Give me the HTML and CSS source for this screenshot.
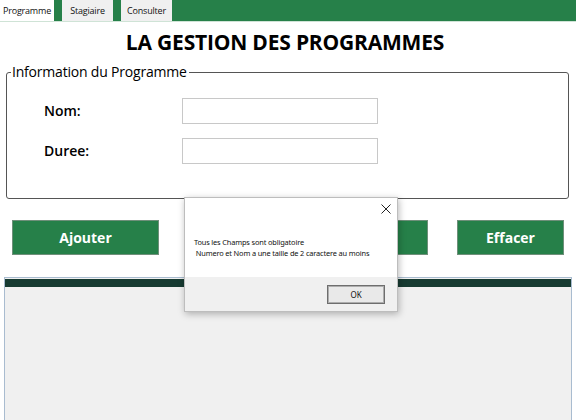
FILE: index.html
```html
<!DOCTYPE html>
<html>
<head>
<meta charset="utf-8">
<link rel="stylesheet" href="styles.css">
</head>
<body>
<div class="app">
  <div class="tabs">
    <div class="tab active">Programme</div>
    <div class="tab">Stagiaire</div>
    <div class="tab">Consulter</div>
  </div>
  <h1 class="title">LA GESTION DES PROGRAMMES</h1>
  <fieldset class="group">
    <legend class="legend">Information du Programme</legend>
    <div class="row"><label class="lbl">Nom:</label><div class="input"></div></div>
    <div class="row"><label class="lbl">Duree:</label><div class="input"></div></div>
  </fieldset>
  <div class="buttons">
    <div class="btn btn-add">Ajouter</div>
    <div class="btn btn-mid">Modifier</div>
    <div class="btn btn-clear">Effacer</div>
  </div>
  <div class="grid">
    <div class="grid-head"></div>
  </div>
  <div class="dialog">
    <div class="dialog-body">
      <div class="dialog-close">
        <svg width="10" height="10" viewBox="0 0 10 10"><path d="M0.5 0.5L9.5 9.5M9.5 0.5L0.5 9.5" stroke="#222" stroke-width="1"/></svg>
      </div>
      <div class="dialog-text">Tous les Champs sont obligatoire<br>&nbsp;Numero et Nom a une taille de 2 caractere au moins</div>
    </div>
    <div class="dialog-foot">
      <div class="ok">OK</div>
    </div>
  </div>
</div>
</body>
</html>
```
FILE: styles.css
```css
* { box-sizing: border-box; }
html, body { margin: 0; padding: 0; }
body {
  width: 576px;
  height: 420px;
  overflow: hidden;
  background: #fff;
  font-family: "Open Sans", "Noto Sans", sans-serif;
  color: #000;
}
.app { position: relative; width: 576px; height: 420px; }
.tabs {
  display: flex;
  gap: 8px;
  height: 22px;
  background: #268049;
  border-bottom: 1px solid #cfe3d6;
}
.tab {
  width: 51px;
  height: 21px;
  background: #f0f0f0;
  font-size: 9px;
  line-height: 21px;
  text-align: center;
  color: #111;
  letter-spacing: -0.2px;
}
.tab.active { width: 54px; background: #fff; }
.title {
  margin: 6px 0 0 0;
  padding-right: 6px;
  text-align: center;
  font-size: 21px;
  font-weight: 700;
  line-height: 28px;
  letter-spacing: -0.2px;
}
.group {
  margin: 8px 7px 0 6px;
  height: 135px;
  border: 1px solid #555;
  border-radius: 3px;
  padding: 18px 0 0 37px;
}
.legend {
  padding: 0 2px 0 1px;
  margin-left: -33px;
  font-size: 14px;
  font-weight: 500;
  line-height: 16px;
  letter-spacing: -0.2px;
}
.row {
  display: flex;
  align-items: center;
  height: 25px;
  margin-bottom: 15px;
}
.lbl {
  width: 138px;
  font-size: 14px;
  font-weight: 600;
}
.input {
  width: 196px;
  height: 26px;
  border: 1px solid #c8c8c8;
  background: #fff;
}
.buttons {
  display: flex;
  margin: 21px 0 0 12px;
  height: 35px;
}
.btn {
  background: #268049;
  border: 1px solid #6f8f7a;
  color: #fff;
  font-weight: 700;
  font-size: 14px;
  display: flex;
  align-items: center;
  justify-content: center;
  height: 35px;
}
.btn-add { width: 147px; }
.btn-mid { width: 146px; margin-left: 123px; }
.btn-clear { width: 107px; margin-left: 29px; }
.grid {
  margin: 22px 4px 0 4px;
  height: 150px;
  background: #f0f0f0;
  border: 1px solid #a9bcd0;
}
.grid-head {
  height: 8px;
  margin-top: 1px;
  background: #173b32;
}
.dialog {
  position: absolute;
  left: 184px;
  top: 197px;
  width: 214px;
  height: 115px;
  background: #fff;
  border: 1px solid #bdbdbd;
  box-shadow: 1px 2px 7px rgba(0,0,0,0.28);
  display: flex;
  flex-direction: column;
  font-family: "Noto Sans", "Open Sans", sans-serif;
}
.dialog-body {
  position: relative;
  height: 79px;
  background: #fff;
  padding: 39px 0 0 9px;
}
.dialog-close {
  position: absolute;
  right: 6px;
  top: 6px;
  width: 10px;
  height: 10px;
  line-height: 0;
}
.dialog-text {
  font-size: 7.4px;
  line-height: 11px;
  letter-spacing: -0.15px;
  color: #111;
  white-space: nowrap;
}
.dialog-foot {
  flex: 1;
  background: #f0f0f0;
  display: flex;
  justify-content: flex-end;
  align-items: flex-start;
  padding: 8px 12px 0 0;
}
.ok {
  width: 58px;
  height: 19px;
  border: 1px solid #6e6e6e;
  box-shadow: inset 0 0 0 1px #adadad;
  background: #e9e9e9;
  font-size: 8px;
  line-height: 17px;
  text-align: center;
  color: #111;
}
```
